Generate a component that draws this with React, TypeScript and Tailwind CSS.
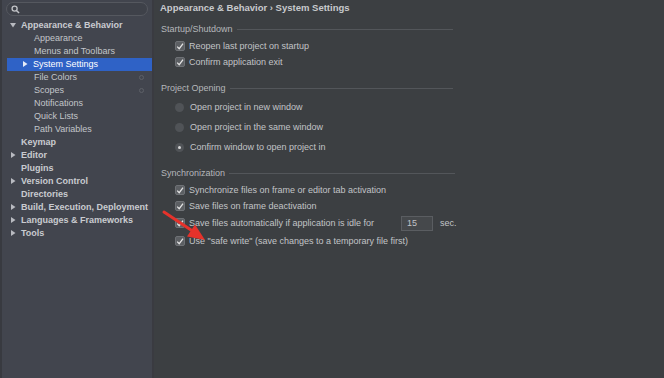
import type { ReactNode } from "react";

const font = { fontFamily: '"Liberation Sans", Arial, sans-serif' };

type TreeItem = {
  label: string;
  level: 0 | 1;
  arrow?: "down" | "right";
  selected?: boolean;
  dot?: boolean;
};

const tree: TreeItem[] = [
  { label: "Appearance & Behavior", level: 0, arrow: "down" },
  { label: "Appearance", level: 1 },
  { label: "Menus and Toolbars", level: 1 },
  { label: "System Settings", level: 1, arrow: "right", selected: true },
  { label: "File Colors", level: 1, dot: true },
  { label: "Scopes", level: 1, dot: true },
  { label: "Notifications", level: 1 },
  { label: "Quick Lists", level: 1 },
  { label: "Path Variables", level: 1 },
  { label: "Keymap", level: 0 },
  { label: "Editor", level: 0, arrow: "right" },
  { label: "Plugins", level: 0 },
  { label: "Version Control", level: 0, arrow: "right" },
  { label: "Directories", level: 0 },
  { label: "Build, Execution, Deployment", level: 0, arrow: "right" },
  { label: "Languages & Frameworks", level: 0, arrow: "right" },
  { label: "Tools", level: 0, arrow: "right" },
];

function Arrow({ dir, light }: { dir: "down" | "right"; light?: boolean }) {
  const color = light ? "#e6ecf8" : "#b8bac0";
  return (
    <svg width="6" height="6" viewBox="0 0 6 6">
      {dir === "down" ? (
        <polygon points="0,1 6,1 3,5.5" fill={color} />
      ) : (
        <polygon points="1,0 5.5,3 1,6" fill={color} />
      )}
    </svg>
  );
}

function TreeRow({ item }: { item: TreeItem }) {
  const arrowX = item.level === 0 ? "pl-[8px]" : "pl-[21px]";
  return (
    <div
      className={`relative flex h-[13px] items-center ${arrowX} ${
        item.selected ? "ml-[5px] bg-[#2f62c6] !pl-[15px]" : ""
      }`}
    >
      <div className="flex w-[11px] items-center">
        {item.arrow && <Arrow dir={item.arrow} light={item.selected} />}
      </div>
      <span
        className={`whitespace-nowrap text-[9px] leading-none ${
          item.level === 0 ? "font-bold text-[#c9cbd0]" : "text-[#c3c5ca]"
        } ${item.selected ? "text-white" : ""}`}
      >
        {item.label}
      </span>
      {item.dot && (
        <span className="absolute right-[8px] top-[4px] h-[5px] w-[5px] rounded-full border border-[#5d6068]" />
      )}
    </div>
  );
}

function Sidebar() {
  return (
    <div className="flex w-[152px] shrink-0 flex-col border-l-2 border-[#383a40] bg-[#42454e]">
      <div className="flex h-[18px] items-start pt-[2px] pl-[4px] pr-[4px]">
        <div className="flex h-[14px] w-full items-center rounded-full border border-[#55585f] bg-[#3e4149] pl-[4px]">
          <svg width="9" height="9" viewBox="0 0 10 10">
            <circle cx="4" cy="4" r="2.8" fill="none" stroke="#c0c2c6" strokeWidth="1.5" />
            <line x1="6" y1="6" x2="9" y2="9" stroke="#c0c2c6" strokeWidth="1.6" />
          </svg>
        </div>
      </div>
      <div className="mt-[0.5px] flex flex-col">
        {tree.map((t) => (
          <TreeRow key={t.label} item={t} />
        ))}
      </div>
    </div>
  );
}

function Section({ title, line }: { title: string; line: number }) {
  return (
    <div className="flex h-[14px] items-center pl-[1px]">
      <span className="whitespace-nowrap text-[9px] leading-none text-[#b5b7ba]">{title}</span>
      <div className="ml-[4px] h-px bg-[#53565a]" style={{ width: line }} />
    </div>
  );
}

function Check({ children, h = 16 }: { children: ReactNode; h?: number }) {
  return (
    <div className="flex items-center pl-[15px]" style={{ height: h }}>
      <div className="flex h-[10px] w-[10px] items-center justify-center rounded-[2px] border border-[#6e7175] bg-[#5c5f63]">
        <svg width="9" height="9" viewBox="0 0 10 10">
          <path d="M1.5 5.2 L4 7.8 L8.8 1.5" fill="none" stroke="#e4e4e4" strokeWidth="1.6" />
        </svg>
      </div>
      <div className="ml-[4px] flex items-center whitespace-nowrap text-[9px] leading-none text-[#c2c4c7]">
        {children}
      </div>
    </div>
  );
}

function Radio({ label, on }: { label: string; on?: boolean }) {
  return (
    <div className="flex h-[20px] items-center pl-[15px]">
      <div className="flex h-[9px] w-[9px] items-center justify-center rounded-full bg-[#505357]">
        {on && <div className="h-[3px] w-[3px] rounded-full bg-[#d6d6d6]" />}
      </div>
      <span className="ml-[6px] whitespace-nowrap text-[9px] leading-none text-[#c2c4c7]">{label}</span>
    </div>
  );
}

// red annotation arrow drawn over the settings
function RedArrow() {
  return (
    <svg className="pointer-events-none absolute left-[160px] top-[206px]" width="56" height="46" viewBox="0 0 56 46">
      <line x1="4" y1="6" x2="31" y2="24" stroke="#e5322b" strokeWidth="3" strokeLinecap="round" />
      <polygon points="45,34 27,30.5 35,18.5" fill="#e5322b" />
    </svg>
  );
}

export default function App() {
  return (
    <div className="relative flex h-[378px] w-[664px] overflow-hidden bg-[#3c3f42]" style={font}>
      <Sidebar />
      <div className="w-[2px] bg-[#3a3b41]" />
      <div className="flex flex-1 flex-col pl-[6px]">
        <div className="flex h-[16px] items-center whitespace-nowrap text-[9.5px] font-bold leading-none text-[#c8cacd]">
          Appearance &amp; Behavior › System Settings
        </div>
        <div className="h-[6px]" />
        <Section title="Startup/Shutdown" line={216} />
        <div className="h-[2px]" />
        <Check>Reopen last project on startup</Check>
        <Check>Confirm application exit</Check>
        <div className="h-[11px]" />
        <Section title="Project Opening" line={223} />
        <div className="h-[2px]" />
        <Radio label="Open project in new window" />
        <Radio label="Open project in the same window" />
        <Radio label="Confirm window to open project in" on />
        <div className="h-[9px]" />
        <Section title="Synchronization" line={226} />
        <div className="h-[2px]" />
        <Check>Synchronize files on frame or editor tab activation</Check>
        <Check>Save files on frame deactivation</Check>
        <Check h={18}>
          <span className="w-[212px]">Save files automatically if application is idle for</span>
          <span className="flex h-[15px] w-[32px] items-center border border-[#5a5d61] bg-[#45484b] pl-[5px]">15</span>
          <span className="ml-[7px]">sec.</span>
        </Check>
        <Check h={18}>Use "safe write" (save changes to a temporary file first)</Check>
      </div>
      <RedArrow />
    </div>
  );
}
